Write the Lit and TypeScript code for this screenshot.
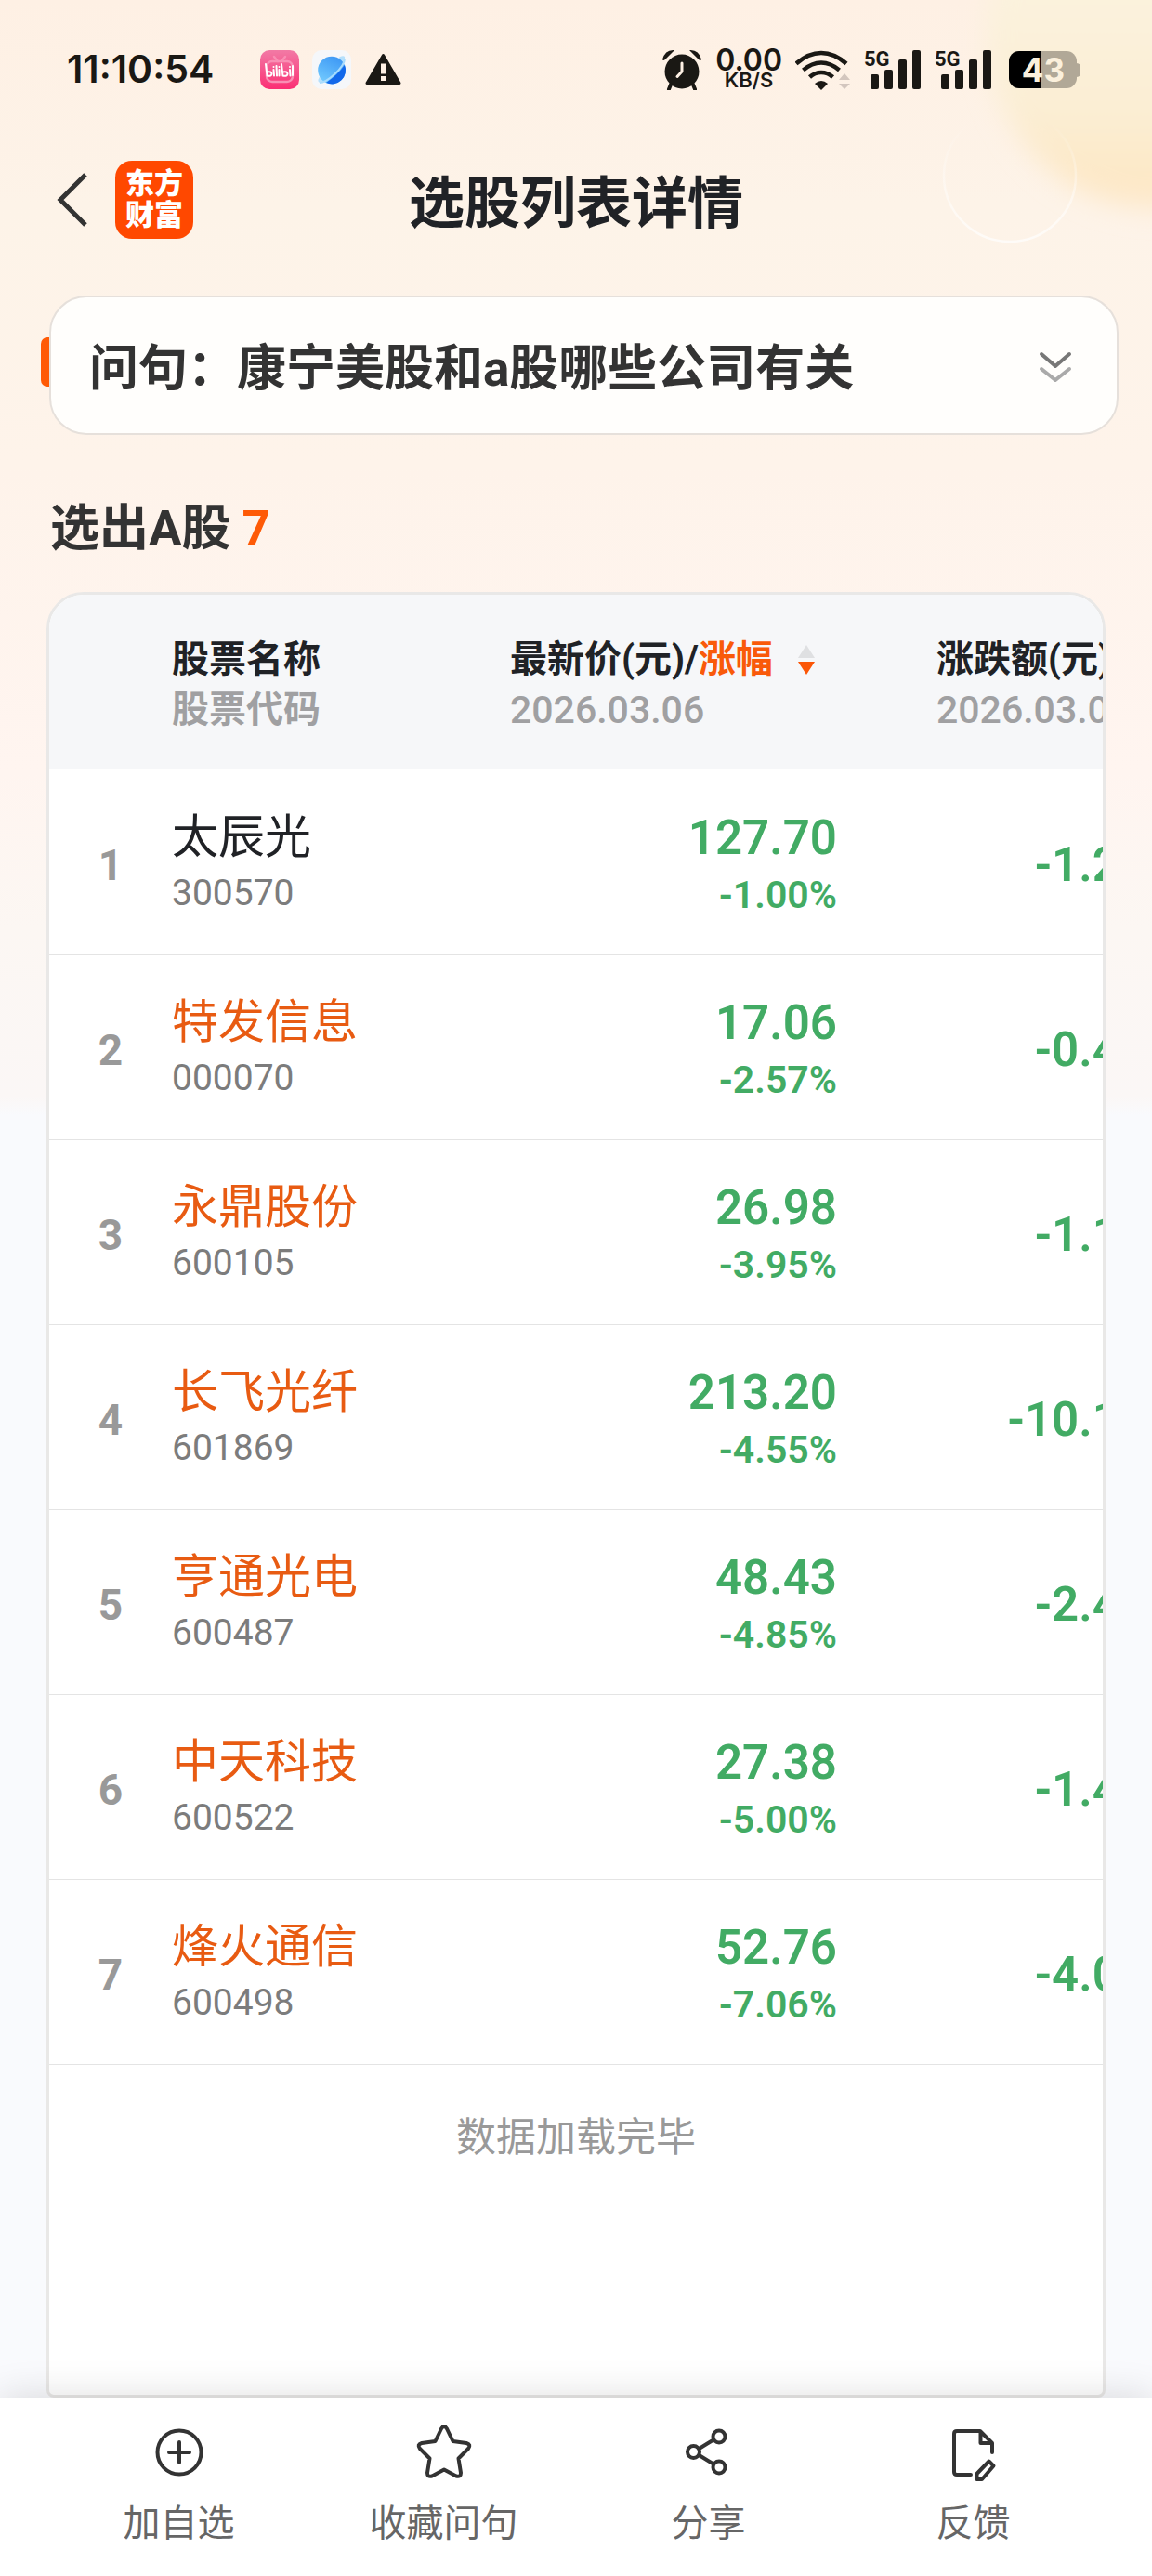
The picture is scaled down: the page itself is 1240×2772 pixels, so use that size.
import { LitElement, html, svg, css } from "lit";
import { customElement } from "lit/decorators.js";

interface Stock {
  name: string;
  code: string;
  price: string;
  pct: string;
  change: string;
  plain?: boolean;
}

const STOCKS: Stock[] = [
  { name: "太辰光", code: "300570", price: "127.70", pct: "-1.00%", change: "-1.29", plain: true },
  { name: "特发信息", code: "000070", price: "17.06", pct: "-2.57%", change: "-0.45" },
  { name: "永鼎股份", code: "600105", price: "26.98", pct: "-3.95%", change: "-1.11" },
  { name: "长飞光纤", code: "601869", price: "213.20", pct: "-4.55%", change: "-10.16" },
  { name: "亨通光电", code: "600487", price: "48.43", pct: "-4.85%", change: "-2.47" },
  { name: "中天科技", code: "600522", price: "27.38", pct: "-5.00%", change: "-1.44" },
  { name: "烽火通信", code: "600498", price: "52.76", pct: "-7.06%", change: "-4.01" },
];

@customElement("status-bar")
class StatusBar extends LitElement {
  static styles = css`
    :host {
      display: flex;
      align-items: center;
      justify-content: space-between;
      height: 109px;
      padding: 40px 76px 0 72px;
      box-sizing: border-box;
      color: #1a1814;
      font-family: Inter, "Noto Sans", sans-serif;
      font-weight: 600;
    }
    .left, .right { display: flex; align-items: center; }
    .time { font-size: 41px; line-height: 48px; padding-bottom: 2px; margin-right: 50px; }
    .apps { display: flex; align-items: center; gap: 14px; }
    .right { gap: 14px; }
    .net { display: flex; flex-direction: column; align-items: center; padding-bottom: 2px; }
    .rate { font-size: 32px; line-height: 24px; }
    .unit { font-size: 22px; line-height: 18px; }
    .battery { margin-left: 4px; }
    svg { display: block; }
  `;

  private signal() {
    return html`<svg width="62" height="44" viewBox="0 0 62 44" role="img" aria-label="5G">
      <text x="0" y="18" font-family="Roboto, sans-serif" font-weight="700" font-size="22" fill="#1a1814">5G</text>
      <g fill="#1a1814">
        <rect x="7" y="27" width="9" height="16" rx="2" />
        <rect x="22" y="22" width="9" height="21" rx="2" />
        <rect x="37" y="11" width="9" height="32" rx="2" />
        <rect x="52" y="1" width="9" height="42" rx="2" />
      </g>
    </svg>`;
  }

  render() {
    return html`
      <div class="left">
        <span class="time">11:10:54</span>
        <div class="apps">
          <svg width="42" height="42" viewBox="0 0 42 42">
            <defs>
              <linearGradient id="pink" x1="0" y1="0" x2="0" y2="1">
                <stop offset="0" stop-color="#f27aa5" />
                <stop offset="1" stop-color="#fb2f74" />
              </linearGradient>
            </defs>
            <rect width="42" height="42" rx="10" fill="url(#pink)" />
            <g fill="none" stroke="#f98fb4" stroke-width="2.4" stroke-linecap="round">
              <path d="M15 7l4 5M27 7l-4 5" />
              <rect x="7" y="12" width="28" height="22" rx="6" />
            </g>
            <g fill="none" stroke="#fff" stroke-width="2" stroke-linecap="round">
              <path d="M6 15l1.500 12.500q5 1 5-2t-5-2M23 15l1.500 12.500q5 1 5-2t-5-2M14.500 21l.5 6.500M17.500 17l.5 10.500M20.500 21v6.500M32 21l.5 6.500M35 17v10" />
              <path d="M14.500 18v.1M20.500 18v.1M32 18v.1" />
            </g>
          </svg>
          <svg width="42" height="42" viewBox="0 0 42 42">
            <defs>
              <linearGradient id="sea" x1="0.700" y1="0" x2="0.200" y2="1">
                <stop offset="0" stop-color="#3c97f5" />
                <stop offset="1" stop-color="#74ccfe" />
              </linearGradient>
            </defs>
            <rect width="42" height="42" rx="10" fill="#f5f7fa" />
            <path d="M8 35q-4-2 2-9L30 7q6-2 5 2-2 8-12 17Q12 36 8 35z" fill="#b5e0fc" />
            <circle cx="21" cy="21.500" r="14.800" fill="url(#sea)" />
            <path d="M35 16Q28 26 15 35A14.800 14.800 0 0 0 35 16z" fill="#1268ea" />
            <path d="M35 9q0 7-11 17Q14 35 8 35" fill="none" stroke="#a9dcfd" stroke-width="2" />
          </svg>
          <svg width="42" height="42" viewBox="0 0 42 42">
            <path d="M20.500 5.500L38 35.500H3z" fill="#1a1814" stroke="#1a1814" stroke-width="3" stroke-linejoin="round" />
            <path d="M18 14.500h5v11h-5zM18 28h5v5h-5z" fill="#fef0e4" />
          </svg>
        </div>
      </div>
      <div class="right">
        <svg width="44" height="44" viewBox="0 0 44 44">
          <g fill="#1a1814">
            <circle cx="22" cy="24" r="18.500" />
            <path d="M1 11Q4 0 14 1L4 11Q2 13 1 11zM43 11Q40 0 30 1l10 10q2 2 3 0z" />
          </g>
          <path d="M10 38l-2 5M34 38l2 5" stroke="#1a1814" stroke-width="4" stroke-linecap="round" />
          <path d="M22 15v9l-5 5.500" fill="none" stroke="#fef0e4" stroke-width="3" stroke-linecap="round" stroke-linejoin="round" />
        </svg>
        <span class="net"><span class="rate">0.00</span><span class="unit">KB/S</span></span>
        <svg width="60" height="44" viewBox="0 0 60 44">
          <g fill="none" stroke="#1a1814" stroke-width="4.600">
            <path d="M1 15.500Q14 4 28 4t27 11.500" />
            <path d="M8.500 22.500Q18 14.500 28 14.500t19.500 8" />
            <path d="M15.500 30Q21 25 28 25t12.500 5" />
          </g>
          <path d="M21 37q7-6 14 0l-7 7z" fill="#1a1814" />
          <path d="M53 26l6 7H47zM53 43l6-6H47z" fill="#d3c6be" />
        </svg>
        ${this.signal()} ${this.signal()}
        <svg class="battery" width="78" height="42" viewBox="0 0 78 42" role="img" aria-label="43%">
          <defs><clipPath id="cell"><rect y="1" width="73" height="40" rx="11" /></clipPath></defs>
          <path d="M72 14q5 0 5 4v7q0 4-5 4z" fill="#b1a897" />
          <g clip-path="url(#cell)">
            <rect y="1" width="73" height="40" fill="#b1a897" />
            <rect y="1" width="34" height="40" fill="#000" />
          </g>
          <text x="37" y="34" text-anchor="middle" font-family="Inter, sans-serif" font-weight="700" font-size="35" fill="#fbf0dc">43</text>
        </svg>
      </div>
    `;
  }
}

@customElement("stock-table")
class StockTable extends LitElement {
  static styles = css`
    :host {
      display: flex;
      flex-direction: column;
      border: 3px solid #e9e8e7;
      border-radius: 40px 40px 8px 8px;
      background: #fff;
      overflow: hidden;
      font-family: Roboto, "Noto Sans CJK SC", sans-serif;
    }
    .scroll { overflow: hidden; }
    table { border-collapse: collapse; table-layout: fixed; width: 1220px; }
    th, td { padding: 0; box-sizing: border-box; }
    .rank-col { width: 132px; }
    .name-col { width: 364px; }
    .price-col { width: 352px; }
    .change-col { width: 372px; }
    th {
      height: 188px;
      padding-top: 6px;
      background: #f6f7f9;
      text-align: left;
      vertical-align: middle;
      font-size: 40px;
      line-height: 54px;
      font-weight: 700;
      color: #202226;
    }
    th.last { padding-left: 107px; }
    .sub { display: block; color: #a0a0a2; }
    .date { font-size: 41px; font-weight: 500; }
    .sort {
      display: inline-flex;
      align-items: center;
      gap: 26px;
      padding: 0;
      border: 0;
      background: none;
      font: inherit;
      color: inherit;
      white-space: nowrap;
    }
    .hot { color: #f95a0a; }
    td { height: 199px; padding-top: 7px; border-bottom: 1px solid #e4e4e4; vertical-align: middle; }
    .rank { text-align: center; font-size: 46px; line-height: 54px; font-weight: 700; color: #999; }
    .name { display: block; font-size: 50px; line-height: 60px; color: #e85b12; text-decoration: none; }
    .name.plain { color: #202226; }
    .code { display: block; font-size: 39px; line-height: 60px; color: #7c7c7c; }
    .num { text-align: right; color: #42ab64; font-weight: 600; }
    .price, .change { font-size: 51px; line-height: 64px; }
    .price { display: block; }
    .pct { display: block; font-size: 41px; line-height: 58px; }
    .change { padding-right: 39px; }
    .done { margin: 0; padding: 49px 0; text-align: center; font-size: 43px; line-height: 58px; color: #999; }
  `;

  render() {
    return html`
      <div class="scroll">
        <table>
          <colgroup>
            <col class="rank-col" /><col class="name-col" /><col class="price-col" /><col class="change-col" />
          </colgroup>
          <thead>
            <tr>
              <th></th>
              <th scope="col">股票名称<span class="sub">股票代码</span></th>
              <th scope="col" aria-sort="descending">
                <button class="sort">
                  <span>最新价(元)/<span class="hot">涨幅</span></span>
                  <svg width="20" height="32" viewBox="0 0 20 32">
                    <path d="M10 0l9 14H1z" fill="#dfe0e2" />
                    <path d="M10 32l9-14H1z" fill="#fb5607" />
                  </svg>
                </button>
                <span class="sub date">2026.03.06</span>
              </th>
              <th scope="col" class="last">涨跌额(元)<span class="sub date">2026.03.06</span></th>
            </tr>
          </thead>
          <tbody>
            ${STOCKS.map(
              (s, i) => html`<tr>
                <td class="rank">${i + 1}</td>
                <td>
                  <a class="name ${s.plain ? "plain" : ""}" href="#${s.code}">${s.name}</a>
                  <span class="code">${s.code}</span>
                </td>
                <td class="num"><span class="price">${s.price}</span><span class="pct">${s.pct}</span></td>
                <td class="num change">${s.change}</td>
              </tr>`
            )}
          </tbody>
        </table>
      </div>
      <p class="done">数据加载完毕</p>
    `;
  }
}

const ICONS = {
  add: svg`<circle cx="30" cy="30" r="23.500" /><path d="M30 19v22M19 30h22" />`,
  star: svg`<path d="M27 4.500q3-5 6 0l6.500 13.500 14.500 2q5.500 1.500 2 6L45.500 36.500 48 52q0 5-5 3.500L30 48.500l-13 7q-5 1.500-5-3.500l2.500-15.500L4 26q-3.500-4.500 2-6l14.500-2z" />`,
  share: svg`<circle cx="13.500" cy="29.500" r="6.500" /><circle cx="41" cy="13" r="6.500" /><circle cx="41" cy="46" r="6.500" /><path d="M19.500 26L35 16.500M19.500 33L35 42.500" />`,
  feedback: svg`<path d="M27 54H12q-3 0-3-3V10q0-3 3-3h25l13 13v10M37.500 7.500V20H50M33.500 59v-6l13-13.500 5 5L39 59z" />`,
};

@customElement("action-bar")
class ActionBar extends LitElement {
  static styles = css`
    :host {
      display: flex;
      padding: 29px 50px 28px;
      background: #fff;
      box-shadow: 0 0 40px rgba(0, 0, 0, 0.14);
      font-family: Roboto, "Noto Sans CJK SC", sans-serif;
    }
    button {
      flex: 1;
      display: flex;
      flex-direction: column;
      align-items: center;
      gap: 19px;
      padding: 0;
      border: 0;
      background: none;
      font: inherit;
      font-size: 40px;
      line-height: 56px;
      color: #666;
    }
    svg { display: block; fill: none; stroke: #333; stroke-width: 4; stroke-linecap: round; stroke-linejoin: round; overflow: visible; }
  `;

  private item(icon: unknown, label: string) {
    return html`<button><svg width="60" height="60" viewBox="0 0 60 60">${icon}</svg>${label}</button>`;
  }

  render() {
    return html`
      ${this.item(ICONS.add, "加自选")} ${this.item(ICONS.star, "收藏问句")}
      ${this.item(ICONS.share, "分享")} ${this.item(ICONS.feedback, "反馈")}
    `;
  }
}

@customElement("app-root")
class AppRoot extends LitElement {
  static styles = css`
    :host {
      display: flex;
      flex-direction: column;
      position: relative;
      min-height: 100vh;
      overflow: hidden;
      isolation: isolate;
      background: linear-gradient(#fef0e4 0, #fdf3e8 220px, #fef3ea 500px, #fff5f0 830px, #fcf7f3 1000px, #fbf7f6 1180px, #f9fafd 1200px);
      font-family: Roboto, "Noto Sans CJK SC", sans-serif;
      color: #333;
    }
    .glow { position: absolute; z-index: -1; top: 0; right: 0; }
    header {
      display: grid;
      grid-template-columns: 1fr auto 1fr;
      align-items: center;
      height: 209px;
      padding: 16px 56px 3px;
      box-sizing: border-box;
    }
    .nav { display: flex; align-items: center; gap: 28px; padding-bottom: 10px; }
    .back { display: block; padding: 0; border: 0; background: none; }
    .logo {
      display: flex;
      flex-direction: column;
      justify-content: center;
      width: 84px;
      height: 84px;
      border-radius: 18px;
      background: #ff4800;
      color: #fff;
      text-align: center;
      font-size: 31px;
      line-height: 34px;
      font-weight: 900;
      text-decoration: none;
    }
    h1 { margin: 0; font-size: 60px; line-height: 80px; font-weight: 700; color: #202226; }
    .query { display: flex; align-items: center; padding: 0 36px 0 44px; }
    .query::before { content: ""; width: 9px; height: 53px; margin-bottom: 8px; border-radius: 7px 0 0 7px; background: #ff5a05; }
    .box {
      flex: 1;
      display: flex;
      align-items: center;
      justify-content: space-between;
      height: 150px;
      padding: 8px 46px 0 41px;
      box-sizing: border-box;
      border: 2px solid #e6e0db;
      border-radius: 40px;
      background: #fffefc;
      font: inherit;
      font-size: 53px;
      line-height: 72px;
      font-weight: 700;
      color: #333;
      text-align: left;
    }
    h2 { display: flex; gap: 12px; margin: 0; padding: 65px 54px 32px; font-size: 53px; line-height: 72px; font-weight: 700; }
    .count { color: #fe5a06; }
    stock-table { flex: 1; margin: 0 50px; }
    svg { display: block; }
  `;

  render() {
    return html`
      <svg class="glow" width="260" height="300" viewBox="0 0 260 300">
        <defs>
          <linearGradient id="sun" gradientUnits="userSpaceOnUse" x1="0" y1="0" x2="0" y2="230">
            <stop offset="0" stop-color="#fbf2dd" />
            <stop offset="0.500" stop-color="#fbeed4" />
            <stop offset="0.850" stop-color="#fde8c6" />
            <stop offset="1" stop-color="#fdead0" />
          </linearGradient>
          <linearGradient id="ring" x1="0" y1="0" x2="0" y2="1">
            <stop offset="0.100" stop-color="#fff" stop-opacity="0" />
            <stop offset="1" stop-color="#fff" stop-opacity="0.700" />
          </linearGradient>
          <filter id="soft" x="-30%" y="-30%" width="160%" height="160%">
            <feGaussianBlur stdDeviation="14" />
          </filter>
        </defs>
        <circle cx="270" cy="38" r="188" fill="url(#sun)" filter="url(#soft)" />
        <circle cx="107" cy="189" r="71" fill="none" stroke="url(#ring)" stroke-width="2.500" />
      </svg>
      <status-bar></status-bar>
      <header>
        <div class="nav">
          <button class="back" aria-label="返回">
            <svg width="40" height="60" viewBox="0 0 40 60">
              <path d="M36 3L9 30l27 27" fill="none" stroke="#333" stroke-width="5" />
            </svg>
          </button>
          <a class="logo" href="#home"><span>东方</span><span>财富</span></a>
        </div>
        <h1>选股列表详情</h1>
      </header>
      <div class="query">
        <button class="box">
          <span>问句：康宁美股和a股哪些公司有关</span>
          <svg width="40" height="40" viewBox="0 0 40 40" fill="none" stroke-width="4" stroke-linecap="round" stroke-linejoin="round">
            <path d="M5 4l15 13L35 4" stroke="#777" />
            <path d="M5 20l15 12 15-12" stroke="#aaa" />
          </svg>
        </button>
      </div>
      <h2>选出A股<span class="count">7</span></h2>
      <stock-table></stock-table>
      <action-bar></action-bar>
    `;
  }
}
